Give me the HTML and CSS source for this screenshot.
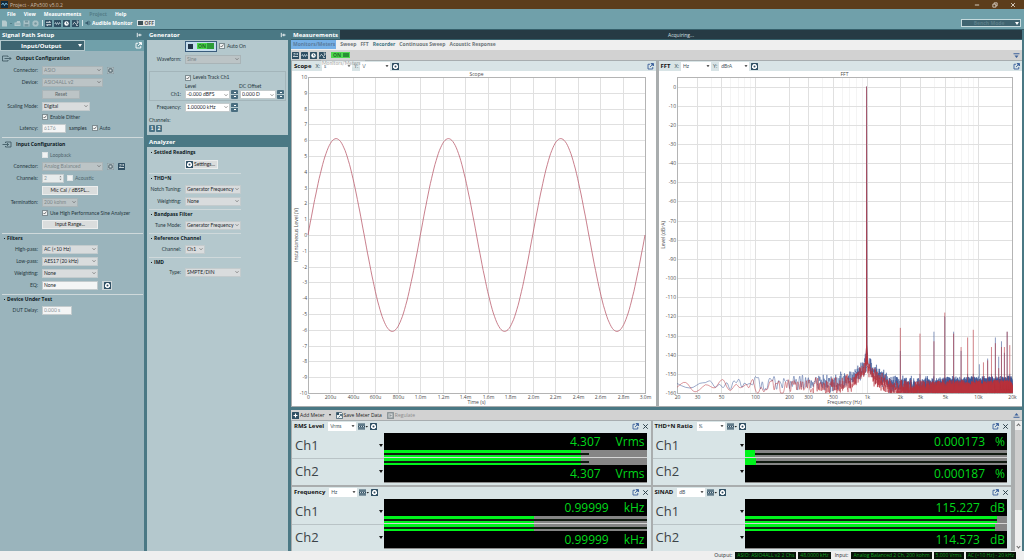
FILE: index.html
```html
<!DOCTYPE html>
<html lang="en">
<head>
<meta charset="utf-8">
<title>Project - APx500 v5.0.2</title>
<link rel="stylesheet" href="styles.css">
</head>
<body>
<svg class="sprite" aria-hidden="true">
  <symbol id="gear" viewBox="0 0 14 14"><rect width="14" height="14" rx="1" fill="#2f4f63"/><path d="M5 2h4l3 3v4l-3 3H5L2 9V5z" fill="#fff"/><circle cx="7" cy="7" r="2" fill="#2f4f63"/></symbol>
  <symbol id="gear-off" viewBox="0 0 14 14"><rect x=".5" y=".5" width="13" height="13" fill="#b7c4c8" stroke="#84959b"/><path d="M5 2h4l3 3v4l-3 3H5L2 9V5z" fill="#6f8087"/><circle cx="7" cy="7" r="2" fill="#c9d3d6"/></symbol>
  <symbol id="gear-pale" viewBox="0 0 14 14"><path d="M4 1h6l3 3v6l-3 3H4l-3-3V4z" fill="#a9c1c6"/><circle cx="7" cy="7" r="2.500" fill="#7698a0"/></symbol>
  <symbol id="swap" viewBox="0 0 14 14"><rect width="14" height="14" rx="1" fill="#2f4f63"/><path d="M2 4.5h9M8.500 2.500l2.500 2M3 9.500h9M5.500 12L3 9.500" stroke="#fff" stroke-width="1.700" fill="none"/></symbol>
  <symbol id="wave" viewBox="0 0 14 14"><rect width="14" height="14" rx="1" fill="#2f4f63"/><path d="M1.500 8l1.500-3 2 4 2-4 2 4 2-4 1.500 3" stroke="#cfe0e6" stroke-width="1.400" fill="none"/></symbol>
  <symbol id="clock" viewBox="0 0 14 14"><rect width="14" height="14" rx="1" fill="#2f4f63"/><circle cx="7" cy="7" r="4.500" fill="#fff"/><path d="M7 4v3.500h2.500" stroke="#2f4f63" stroke-width="1.300" fill="none"/></symbol>
  <symbol id="graph" viewBox="0 0 14 14"><rect width="14" height="14" rx="1" fill="#2f4f63"/><path d="M2 9c2-5 3-5 5-2s3 2 5-3" stroke="#fff" stroke-width="1.500" fill="none"/><path d="M8 11h4M9 2h3v3" stroke="#fff" stroke-width="1.200" fill="none"/></symbol>
  <symbol id="bars" viewBox="0 0 14 14"><rect width="14" height="14" rx="1" fill="#2f4f63"/><path d="M2 9h10" stroke="#e6eef0" stroke-width="1.600"/><path d="M8 2v4M11 2v4M3 3h3M3 6h3" stroke="#e6eef0" stroke-width="1.300"/></symbol>
  <symbol id="meterset" viewBox="0 0 20 14"><rect y="1" width="14" height="12" fill="#2f4f63"/><path d="M0 4h14M0 10h14" stroke="#d8e4e6" stroke-width="1.200"/><path d="M2 7h2M6 7h2M10 7h2" stroke="#fff" stroke-width="1.500"/><path d="M15 6h5l-2.500 3z" fill="#222"/></symbol>
  <symbol id="popout" viewBox="0 0 14 14"><path d="M6 2.500H2v9.500h9.500V8" fill="none" stroke="currentColor" stroke-width="1.800"/><path d="M8 1h5v5zM12 2L6 8" fill="currentColor" stroke="currentColor" stroke-width="1.700"/></symbol>
  <symbol id="pin" viewBox="0 0 14 14"><path d="M3 2v10M5 7h8M9 4v6" stroke="currentColor" stroke-width="2" fill="none"/></symbol>
  <symbol id="cross" viewBox="0 0 14 14"><path d="M2.500 2.500l9 9M11.500 2.500l-9 9" stroke="currentColor" stroke-width="2" fill="none"/></symbol>
  <symbol id="up" viewBox="0 0 14 14"><path d="M7 2l4 5H3z" fill="currentColor"/><path d="M1 10.500h12" stroke="currentColor" stroke-width="2"/></symbol>
  <symbol id="down" viewBox="0 0 14 14"><path d="M7 12L3 7h8z" fill="currentColor"/><path d="M1 3.500h12" stroke="currentColor" stroke-width="2"/></symbol>
  <symbol id="out" viewBox="0 0 20 14"><path d="M12 4V2H1v10h11v-2M5 7h13M15 4l3 3-3 3" fill="none" stroke="#37525c" stroke-width="1.600"/></symbol>
  <symbol id="in" viewBox="0 0 20 14"><path d="M7 4V2h11v10H7v-2M1 7h12M10 4l3 3-3 3" fill="none" stroke="#37525c" stroke-width="1.600"/></symbol>
  <symbol id="page" viewBox="0 0 14 14"><path d="M2 1h7l3 3v9H2z" fill="#b5cace"/></symbol>
  <symbol id="folder" viewBox="0 0 14 14"><path d="M1 5h4l1-3h6v3h1v7H1z" fill="#b5cace"/><path d="M3 8h9" stroke="#7698a0" stroke-width="1.500"/></symbol>
  <symbol id="disk" viewBox="0 0 14 14"><path d="M1 1h12v12H1z" fill="#a9c1c6"/><path d="M4 1h6v4H4zM3 8h8v5H3z" fill="#7698a0"/></symbol>
  <symbol id="speaker" viewBox="0 0 14 14"><path d="M1 5h3l4-4v12L4 9H1z" fill="#34586a"/><path d="M10 3c2 2 2 6 0 8" stroke="#34586a" stroke-width="1.500" fill="none"/></symbol>
  <symbol id="plus" viewBox="0 0 14 14"><rect width="14" height="14" rx="1" fill="#2f4f63"/><path d="M7 3v8M3 7h8" stroke="#fff" stroke-width="2.200"/></symbol>
  <symbol id="save" viewBox="0 0 14 14"><path d="M1 1h10l2 2v10H1z" fill="#eef2f3" stroke="#2f4f63" stroke-width="1.400"/><path d="M1 1h5v5H1z" fill="#2f4f63"/><path d="M5 11l6-6M7.500 5H11v3.500" stroke="#2f4f63" stroke-width="1.500" fill="none"/></symbol>
  <symbol id="play" viewBox="0 0 14 14"><rect width="14" height="14" rx="1" fill="#8d9699"/><path d="M3 3h8v8H3z" fill="#d5d8d9"/><path d="M5 4l5 3-5 3z" fill="#8d9699"/></symbol>
  <symbol id="min" viewBox="0 0 14 14"><path d="M2 7h10" stroke="#e8dfd5" stroke-width="2"/></symbol>
  <symbol id="restore" viewBox="0 0 14 14"><path d="M2 5h7v7H2zM5 5V2h7v7H9" stroke="#e8dfd5" stroke-width="1.800" fill="none"/></symbol>
  <symbol id="app" viewBox="0 0 14 14"><rect width="14" height="14" fill="#102c40"/><path d="M1 8l3-4 3 5 3-5 3 4" stroke="#8fd0f0" stroke-width="1.600" fill="none"/></symbol>
</svg>

<header class="titlebar">
  <svg class="icon"><use href="#app"/></svg><span class="grow">Project - APx500 v5.0.2</span>
  <button class="win" aria-label="Minimize"><svg class="tiny"><use href="#min"/></svg></button>
  <button class="win" aria-label="Restore"><svg class="tiny"><use href="#restore"/></svg></button>
  <button class="win light" aria-label="Close"><svg class="tiny"><use href="#cross"/></svg></button>
</header>
<div class="topbar">
  <div class="grow">
    <nav class="menu"><a href="#">File</a><a href="#">View</a><a href="#">Measurements</a><a href="#" class="off">Project</a><a href="#">Help</a></nav>
    <div class="tools">
      <svg class="icon"><use href="#page"/></svg><span class="dot"></span>
      <svg class="icon"><use href="#folder"/></svg><svg class="icon"><use href="#disk"/></svg><svg class="icon"><use href="#gear-pale"/></svg>
      <span class="sep"></span>
      <svg class="icon"><use href="#swap"/></svg><svg class="icon"><use href="#wave"/></svg><svg class="icon"><use href="#clock"/></svg><svg class="icon"><use href="#graph"/></svg>
      <span class="sep"></span>
      <svg class="tiny"><use href="#speaker"/></svg><span class="audible">Audible Monitor</span>
      <button class="toggle off"><i></i>OFF</button>
    </div>
  </div>
  <button class="bench"><span class="grow">Bench Mode</span><span class="tri"></span></button>
</div>

<main class="workspace">
  <section class="signal">
    <h2 class="bar">Signal Path Setup<svg class="tiny"><use href="#pin"/></svg></h2>
    <div class="picker"><button class="io">Input/Output<span class="tri"></span></button><svg class="icon"><use href="#popout"/></svg></div>
    <div class="group first">
      <h3 class="big"><svg class="wide"><use href="#out"/></svg>Output Configuration</h3>
      <div class="row"><label for="oc">Connector:</label><select id="oc" class="w60" disabled><option>ASIO</option></select><svg class="icon gap"><use href="#gear-off"/></svg></div>
      <div class="row"><label for="od">Device:</label><select id="od" class="w60" disabled><option>ASIO4ALL v2</option></select></div>
      <div class="row"><span></span><button class="btn w38" disabled>Reset</button></div>
      <div class="row"><label for="sm">Scaling Mode:</label><select id="sm" class="w48"><option>Digital</option></select></div>
      <div class="row short"><span></span><label class="check"><input type="checkbox" checked>Enable Dither</label></div>
      <div class="row"><label for="la">Latency:</label><input id="la" class="w24" value="6176" disabled><em>samples</em><label class="check"><input type="checkbox" checked>Auto</label></div>
    </div>
    <div class="group">
      <h3 class="big"><svg class="wide"><use href="#in"/></svg>Input Configuration</h3>
      <div class="row short"><span></span><label class="check dim"><input type="checkbox">Loopback</label></div>
      <div class="row"><label for="ic">Connector:</label><select id="ic" class="w60" disabled><option>Analog Balanced</option></select><svg class="icon gap"><use href="#gear-off"/></svg><svg class="icon gap"><use href="#bars"/></svg></div>
      <div class="row"><label for="ch">Channels:</label><input id="ch" class="w22 spin" value="2" disabled><label class="check dim"><input type="checkbox">Acoustic</label></div>
      <div class="row"><span></span><button class="btn w56">Mic Cal / dBSPL...</button></div>
      <div class="row"><label for="te">Termination:</label><select id="te" class="w36" disabled><option>200 kohm</option></select></div>
      <div class="row short"><span></span><label class="check"><input type="checkbox" checked>Use High Performance Sine Analyzer</label></div>
      <div class="row"><span></span><button class="btn w56">Input Range...</button></div>
    </div>
    <div class="group">
      <h3>Filters</h3>
      <div class="row"><label for="hp">High-pass:</label><select id="hp" class="w56"><option>AC (&lt;10 Hz)</option></select></div>
      <div class="row"><label for="lp">Low-pass:</label><select id="lp" class="w56"><option>AES17 (20 kHz)</option></select></div>
      <div class="row"><label for="we">Weighting:</label><select id="we" class="w56"><option>None</option></select></div>
      <div class="row"><label for="eq">EQ:</label><input id="eq" class="w56" value="None"><button class="iconbtn" aria-label="EQ settings"><svg class="icon"><use href="#gear"/></svg></button></div>
    </div>
    <div class="group">
      <h3>Device Under Test</h3>
      <div class="row"><label for="dd">DUT Delay:</label><input id="dd" class="w30" value="0.000 s" disabled></div>
    </div>
  </section>

  <div class="middle">
    <section class="generator">
      <h2 class="bar">Generator<svg class="tiny"><use href="#pin"/></svg></h2>
      <div class="row on-row"><span></span><button class="power"><i></i><b>ON</b></button><label class="check"><input type="checkbox" checked>Auto On</label></div>
      <div class="row wf"><label for="wa">Waveform:</label><select id="wa" class="w56" disabled><option>Sine</option></select></div>
      <fieldset class="levels">
        <div class="row track"><span></span><label class="check"><input type="checkbox" checked>Levels Track Ch1</label></div>
        <div class="row cap"><span></span><label for="lv" class="lefty w54">Level</label><label for="dc" class="lefty">DC Offset</label></div>
        <div class="row ch"><label for="lv">Ch1:</label><select id="lv" class="w44 white"><option>-0.000 dBFS</option></select><button class="step" aria-label="Level step"></button><select id="dc" class="w36 white"><option>0.000 D</option></select><button class="step" aria-label="Offset step"></button></div>
      </fieldset>
      <div class="row freq"><label for="fr">Frequency:</label><select id="fr" class="w44 white"><option>1.00000 kHz</option></select><button class="step" aria-label="Frequency step"></button></div>
      <p class="channels">Channels:</p>
      <div class="chbtns"><button>1</button><button>2</button></div>
    </section>
    <section class="analyzer">
      <h2 class="bar">Analyzer</h2>
      <div class="group"><h3>Settled Readings</h3>
        <div class="row tall"><span></span><button class="btn settings"><svg class="icon"><use href="#gear"/></svg>Settings...</button></div></div>
      <div class="group"><h3>THD+N</h3>
        <div class="row"><label for="nt">Notch Tuning:</label><select id="nt" class="w56"><option>Generator Frequency</option></select></div>
        <div class="row"><label for="w2">Weighting:</label><select id="w2" class="w56"><option>None</option></select></div></div>
      <div class="group"><h3>Bandpass Filter</h3>
        <div class="row"><label for="tm">Tune Mode:</label><select id="tm" class="w56"><option>Generator Frequency</option></select></div></div>
      <div class="group"><h3>Reference Channel</h3>
        <div class="row"><label for="rc">Channel:</label><select id="rc" class="w20"><option>Ch1</option></select></div></div>
      <div class="group"><h3>IMD</h3>
        <div class="row imd"><label for="ty">Type:</label><select id="ty" class="w56"><option>SMPTE/DIN</option></select></div></div>
    </section>
  </div>

  <section class="measure">
    <div class="mhead"><h2>Measurements</h2><p>Acquiring...</p></div>
    <nav class="tabs"><a href="#" class="sel">Monitors/Meters</a><a href="#">Sweep</a><a href="#">FFT</a><a href="#" class="hot">Recorder</a><a href="#">Continuous Sweep</a><a href="#">Acoustic Response</a></nav>
    <div class="mtools"><svg class="icon"><use href="#bars"/></svg><svg class="icon"><use href="#wave"/></svg><svg class="icon"><use href="#clock"/></svg><svg class="icon"><use href="#graph"/></svg><button class="toggle on">ON<i></i></button><span class="grow"></span><svg class="icon blue"><use href="#down"/></svg></div>
    <div class="charts">
      <article class="pane">
        <header class="phead"><h3>Scope</h3><label for="sx">X:</label><span class="held"><select id="sx" class="unit w30"><option>s</option></select><span class="ghost">Monitors/Meters</span></span><label for="sy">Y:</label><select id="sy" class="unit w30"><option>V</option></select><svg class="icon"><use href="#gear"/></svg><span class="grow"></span><svg class="icon blue"><use href="#popout"/></svg></header>
        <div class="plot" id="scope"></div>
      </article>
      <article class="pane">
        <header class="phead"><h3>FFT</h3><label for="fx">X:</label><select id="fx" class="unit w30"><option>Hz</option></select><label for="fy">Y:</label><select id="fy" class="unit w30"><option>dBrA</option></select><svg class="icon"><use href="#gear"/></svg><span class="grow"></span><svg class="icon blue"><use href="#popout"/></svg></header>
        <div class="plot" id="fft"></div>
      </article>
    </div>
    <div class="mtools meterbar"><button><svg class="icon"><use href="#plus"/></svg>Add Meter<span class="tri dark"></span></button><button><svg class="icon"><use href="#save"/></svg>Save Meter Data</button><button disabled><svg class="icon"><use href="#play"/></svg>Regulate</button><span class="grow"></span><svg class="icon blue"><use href="#up"/></svg></div>
    <div class="meterwrap">
      <div class="meters">
        <article class="meter">
          <header class="phead"><h3>RMS Level</h3><select class="unit w28" aria-label="RMS Level unit"><option>Vrms</option></select><svg class="wide"><use href="#meterset"/></svg><svg class="icon"><use href="#gear"/></svg><span class="grow"></span><svg class="icon blue"><use href="#popout"/></svg><svg class="icon shut"><use href="#cross"/></svg></header>
          <div class="mbody">
            <div class="names"><div>Ch1<span class="tri dark"></span></div><div>Ch2<span class="tri dark"></span></div></div>
            <div class="lcd"><p><span>4.307</span><span>Vrms</span></p>
              <div class="level"><i style="width:75%"></i><b style="width:78%"></b></div><div class="level"><i style="width:75%"></i><b style="width:78%"></b></div>
              <p><span>4.307</span><span>Vrms</span></p></div>
          </div>
        </article>
        <article class="meter">
          <header class="phead"><h3>THD+N Ratio</h3><select class="unit w28" aria-label="THD+N Ratio unit"><option>%</option></select><svg class="wide"><use href="#meterset"/></svg><svg class="icon"><use href="#gear"/></svg><span class="grow"></span><svg class="icon blue"><use href="#popout"/></svg><svg class="icon shut"><use href="#cross"/></svg></header>
          <div class="mbody">
            <div class="names"><div>Ch1<span class="tri dark"></span></div><div>Ch2<span class="tri dark"></span></div></div>
            <div class="lcd"><p><span>0.000173</span><span>%</span></p>
              <div class="level"><b style="width:100%"></b><i style="width:4%"></i></div><div class="level"><b style="width:100%"></b><i style="width:4.5%"></i></div>
              <p><span>0.000187</span><span>%</span></p></div>
          </div>
        </article>
        <article class="meter">
          <header class="phead"><h3>Frequency</h3><select class="unit w28" aria-label="Frequency unit"><option>Hz</option></select><svg class="wide"><use href="#meterset"/></svg><svg class="icon"><use href="#gear"/></svg><span class="grow"></span><svg class="icon blue"><use href="#popout"/></svg><svg class="icon shut"><use href="#cross"/></svg></header>
          <div class="mbody">
            <div class="names"><div>Ch1<span class="tri dark"></span></div><div>Ch2<span class="tri dark"></span></div></div>
            <div class="lcd"><p><span>0.99999</span><span>kHz</span></p>
              <div class="level"><i style="width:57%"></i><b style="width:100%"></b></div><div class="level"><i style="width:57%"></i><b style="width:100%"></b></div>
              <p><span>0.99999</span><span>kHz</span></p></div>
          </div>
        </article>
        <article class="meter">
          <header class="phead"><h3>SINAD</h3><select class="unit w28" aria-label="SINAD unit"><option>dB</option></select><svg class="wide"><use href="#meterset"/></svg><svg class="icon"><use href="#gear"/></svg><span class="grow"></span><svg class="icon blue"><use href="#popout"/></svg><svg class="icon shut"><use href="#cross"/></svg></header>
          <div class="mbody">
            <div class="names"><div>Ch1<span class="tri dark"></span></div><div>Ch2<span class="tri dark"></span></div></div>
            <div class="lcd"><p><span>115.227</span><span>dB</span></p>
              <div class="level"><i style="width:96%"></i><b style="width:96%"></b></div><div class="level"><i style="width:95.5%"></i><b style="width:95.5%"></b></div>
              <p><span>114.573</span><span>dB</span></p></div>
          </div>
        </article>
      </div>
      <div class="scroll"><span class="chev upw"></span><i></i><span class="chev"></span></div>
    </div>
  </section>
</main>
<footer class="status"><span>Output:</span><b>ASIO: ASIO4ALL v2 2 Chs</b><b>48.0000 kHz</b><span>Input:</span><b>Analog Balanced 2 Ch, 200 kohm</b><b>5.000 Vrms</b><b>AC (&lt;10 Hz) - 20 kHz</b></footer>
<script src="charts.js"></script>
</body>
</html>
```

FILE: styles.css
```css
* { box-sizing: border-box; }
body {
  margin: 0; min-height: 100vh; display: flex; flex-direction: column;
  background: #4a7884; color: #1b282d;
  font: 5px/7px "Lato", "Open Sans", sans-serif;
}
h2, h3, p, fieldset { margin: 0; padding: 0; border: 0; font-weight: 400; }
a { color: inherit; text-decoration: none; }
button, input, select { font: inherit; color: inherit; margin: 0; padding: 0; border: 0; border-radius: 0; }
button { background: none; }
em { font-style: normal; }
.sprite { position: absolute; width: 0; height: 0; }
.icon { width: 7px; height: 7px; flex: none; }
.tiny { width: 6px; height: 6px; flex: none; display: block; }
.wide { width: 10px; height: 7px; flex: none; }
.grow { flex: 1; }
.blue { color: #3a5f9a; }
.tri { border: 2px solid transparent; border-top: 3px solid #fff; border-bottom: 0; display: inline-block; flex: none; }
.tri.dark { border-top-color: #111; }

/* window frame */
.titlebar { height: 9px; display: flex; align-items: center; gap: 2px; padding: 0 8px 0 1px; background: #5c3d1b; color: #c9bcae; font: 5px/8px "Open Sans", sans-serif; }
.win { width: 6px; margin-left: 10px; }
.light { color: #e8dfd5; }
.topbar { display: flex; align-items: flex-end; height: 21px; padding: 2px 3px 2px 1px; background: #70a0aa; border-bottom: 1px solid #36606b; font-family: "Open Sans", sans-serif; }
.topbar > .grow { display: flex; flex-direction: column; gap: 1px; }
.menu { display: flex; gap: 8px; padding-left: 6px; color: #fff; font-weight: 700; line-height: 8px; }
.menu .off { color: #557f89; }
.tools { display: flex; align-items: center; gap: 2px; height: 8px; }
.dot { width: 2px; height: 1px; background: #54808a; }
.sep { width: 1px; height: 6px; background: #d5e4e7; margin: 0 1px; }
.tools .icon + .sep { margin-right: 0; }
.audible { color: #fff; font-weight: 700; margin-left: -1px; }
.toggle { display: inline-flex; align-items: center; gap: 2px; height: 6px; padding: 0 1px; font: 700 5px/6px "Open Sans", sans-serif; }
.toggle.off { background: #dfe6e8; color: #555; margin-left: 2px; }
.toggle.off i { width: 5px; height: 4px; background: #3d5158; }
.toggle.on { background: #50d850; color: #1e6a24; margin-left: 3px; padding-left: 2px; }
.toggle.on i { width: 6px; height: 4px; background: #289034; }
.bench { display: flex; align-items: center; width: 60px; height: 8px; padding: 0 1px; border: 1px solid #c6dadd; background: #3f6470; color: #5b7e88; font: 700 5px/6px "Open Sans", sans-serif; white-space: nowrap; }

/* columns */
.workspace { flex: 1; display: grid; grid-template-columns: 144px 141px minmax(0, 1fr); gap: 3px; padding-right: 2px; }
.bar { display: flex; justify-content: space-between; align-items: center; height: 10px; padding: 0 2px; background: #4a7884; color: #fff; font: 700 6px/9px "Open Sans", sans-serif; }
.signal { background: #9ab4bc; }
.picker { display: flex; justify-content: space-between; align-items: center; padding-right: 2px; height: 11px; background: #70a0aa; color: #fff; }
.io { display: flex; justify-content: space-between; align-items: center; width: 85px; height: 11px; padding: 0 2px 0 20px; border: 1px solid #b4c9cd; background: #3d6470; color: #fff; font: 700 6px/8px "Open Sans", sans-serif; }
.group { padding: 0 0 3px; margin: 0 1px 0 2px; border-top: 1px solid #cfd9db; }
.group.first { border: 0; padding-top: 1px; }
.group h3 { font: 700 5px/9px "Open Sans", sans-serif; height: 9px; color: #0d1a1f; display: flex; align-items: center; gap: 2px; }
.group h3:not(.big)::before { content: ""; width: 1px; height: 1px; margin: 0 0 0 2px; background: #15242a; }
.group h3.big { height: 12px; gap: 4px; }
.row { display: flex; align-items: center; height: 12px; }
.row.short { height: 10px; }
.row > :first-child { width: 36px; margin-right: 4px; flex: none; text-align: right; }
.row > span:first-child { display: block; }
.row label, .channels { color: #26383f; white-space: nowrap; }
.row .gap { margin-left: 4px; }
.row em { margin: 0 5px 0 3px; color: #1b2a30; }
.check { display: flex; align-items: center; gap: 2px; }
.row .dim { color: #4f646c; }
.spin + .check { margin-left: 3px; }
input[type=checkbox] { appearance: none; width: 6px; height: 6px; background: #f1f3f3; border: 1px solid #dfe4e5; }
input[type=checkbox]:checked { border-color: #7e8d92; background: #f1f3f3 url("data:image/svg+xml,%3Csvg xmlns='http://www.w3.org/2000/svg' viewBox='0 0 8 8'%3E%3Cpath d='M1 4l2 2 4-5' stroke='%23333' fill='none' stroke-width='1.300'/%3E%3C/svg%3E"); }
select, .row input:not([type=checkbox]) { height: 9px; padding: 0 1px; line-height: 7px; border: 1px solid #c3cbcd; }
select { appearance: none; background: #d9dcdd url("data:image/svg+xml,%3Csvg xmlns='http://www.w3.org/2000/svg' viewBox='0 0 8 8'%3E%3Cpath d='M1 2.500l3 3 3-3' stroke='%23555' fill='none' stroke-width='1.200'/%3E%3C/svg%3E") no-repeat right 1px center / 4px 4px; }
select.white { background-color: #fff; }
.row input:not([type=checkbox]) { background: #f4f5f5; }
.row input.spin { background: #e8ecec url("data:image/svg+xml,%3Csvg xmlns='http://www.w3.org/2000/svg' viewBox='0 0 8 14'%3E%3Cpath d='M4 1l3 4H1zM4 13l3-4H1z' fill='%23888'/%3E%3C/svg%3E") no-repeat right 1px center / 3px 6px; }
select:disabled { background-color: #bcc4c6; border-color: #a9b4b7; color: #7b8689; opacity: 1; }
.row input:disabled { color: #8c979b; }
.btn { height: 9px; background: #dadddd; border: 1px solid #eceeee; text-align: center; line-height: 7px; color: #222; }
.btn:disabled { background: #bcc4c6; border-color: #aab5b8; color: #5c666a; }
.iconbtn { display: flex; align-items: center; justify-content: center; width: 10px; height: 9px; margin-left: 4px; background: #cdd6d8; }
.w20 { width: 20px; } .w22 { width: 22px; } .w24 { width: 24px; } .w28 { width: 28px; } .w30 { width: 30px; }
.w36 { width: 36px; } .w38 { width: 38px; } .w44 { width: 45px; } .w48 { width: 48px; } .w54 { width: 54px; } .w56 { width: 56px; } .w60 { width: 61px; }

/* generator and analyzer */
.middle { display: flex; flex-direction: column; gap: 2px; }
.generator, .analyzer { background: #b4c8cd; }
.generator { padding-bottom: 3px; }
.analyzer { flex: 1; }
.middle .row > :first-child { width: 34px; }
.on-row .power { display: flex; align-items: center; gap: 4px; width: 32px; height: 11px; padding: 0 2px; margin-right: 2px; border: 1px solid #3a5c7c; background: #c4dcec; }
.power i { width: 5px; height: 5px; flex: none; background: #22354a; }
.power b { width: 17px; height: 6px; background: linear-gradient(90deg, #4ad94a 60%, #2c9c38 60%); color: #1c6424; font: 700 5px/6px "Open Sans", sans-serif; text-align: left; padding-left: 1px; }
.middle .row.wf { height: 14px; margin-bottom: 5px; }
.levels { border: 1px solid #a3b5ba; margin: 0 2px; }
.levels .row > :first-child { width: 31px; }
.levels .row.track { height: 11px; }
.levels .row.cap { height: 6px; }
.levels .row.ch { height: 11px; }
.row .lefty { text-align: left; }
.step { width: 7px; height: 9px; flex: none; margin: 0 1px; border-radius: 1px; background: linear-gradient(#b4c8cd, #b4c8cd) center / 7px 1px no-repeat, linear-gradient(#fff, #fff) 3px 2px / 2px 1px no-repeat, linear-gradient(#fff, #fff) 3px 6px / 2px 1px no-repeat, #4a6e80; }
.levels .step + select { margin-left: 1px; }
.channels { padding: 4px 2px 1px; }
.chbtns { display: flex; gap: 1px; padding-left: 2px; }
.chbtns button { width: 6px; height: 7px; background: #4a7284; color: #fff; border-radius: 1px; font-weight: 700; line-height: 7px; }
.analyzer .group { margin-right: 47px; padding-bottom: 2px; }
.analyzer .bar + .group { border-top: 0; padding-top: 1px; }
.row.tall { height: 14px; }
.row.imd { height: 10px; }
.settings { display: flex; align-items: center; gap: 1px; width: 33px; }
.analyzer .group .row > :first-child { width: 32px; }

/* measurements */
.measure { display: flex; flex-direction: column; min-width: 0; }
.mhead { display: flex; height: 10px; background: #263a44; border-bottom: 1px solid #36606b; }
.mhead h2 { width: 49px; padding-left: 2px; background: #4a7884; color: #fff; font: 700 6px/10px "Open Sans", sans-serif; }
.mhead p { flex: 1; text-align: center; color: #d9e0e2; font: 5px/10px "Open Sans", sans-serif; }
.tabs { display: flex; gap: 4px; height: 10px; background: #efefef; color: #6d7679; font: 700 5px/9px "Open Sans", sans-serif; }
.tabs .sel { padding: 0 1px 0 2px; background: #76b0e6; color: #5a7da0; height: 9px; }
.tabs .hot { color: #3c7280; }
.mtools { display: flex; align-items: center; gap: 2px; height: 11px; padding: 0 2px 0 1px; background: #d2d2d2; border-bottom: 1px solid #a7adaf; }
.charts { flex: 1; display: grid; grid-template-columns: minmax(0, 1fr) minmax(0, 1fr); gap: 2px; background: #a9adae; padding-bottom: 1px; }
.pane { display: flex; flex-direction: column; background: #fff; margin-left: 1px; }
.phead { display: flex; align-items: center; gap: 2px; height: 10px; padding: 0 2px; background: #d8e4e6; color: #44565d; flex: none; }
.phead h3 { color: #111; font: 700 6px/9px "Open Sans", sans-serif; margin-right: 2px; }
.shut { margin-left: 1px; color: #2b3f49; }
select.unit { height: 9px; border: 0; background: #fff url("data:image/svg+xml,%3Csvg xmlns='http://www.w3.org/2000/svg' viewBox='0 0 8 8'%3E%3Cpath d='M1 2.500h6L4 6z' fill='%23222'/%3E%3C/svg%3E") no-repeat right 1px center / 4px 4px; padding: 0 2px; }
.held { position: relative; display: flex; }
.ghost { position: absolute; left: -1px; top: -2px; width: 44px; padding-left: 1px; line-height: 7px; font-weight: 700; color: #8a8a8a; background: rgb(255 255 255 / .4); opacity: .6; }
.plot { flex: 1; position: relative; min-height: 100px; }
.plot svg { position: absolute; inset: 0; width: 100%; height: 100%; }
.plot text { font: 5px "Open Sans", sans-serif; fill: #4a4a4a; }
.grid { stroke: #e0e0e0; fill: none; }
.grid.minor { stroke: #f4f4f4; }
.frame { stroke: #b4b4b4; fill: none; }
.meterbar { margin-top: 3px; height: 11px; }
.meterbar button { display: flex; align-items: center; gap: 1px; margin-right: 3px; font: 5px/8px "Open Sans", sans-serif; color: #222; }
.meterbar .tri { border-width: 1px; border-top-width: 2px; margin-left: 3px; }
.meterbar button:disabled { color: #8b8b8b; }
.meterwrap { display: flex; background: #a9adae; }
.meters { flex: 1; display: grid; grid-template-columns: minmax(0, 1fr) minmax(0, 1fr); gap: 2px; padding: 0 4px 0 1px; }
.meter { background: #d8e4e6; height: 64px; min-width: 0; }
.mbody { display: grid; grid-template-columns: 92px minmax(0, 1fr); padding: 2px 4px 2px 0; }
.names { font: 13px/25px "Open Sans", sans-serif; color: #3c4347; }
.names > div { display: flex; align-items: center; justify-content: space-between; height: 25px; padding: 0 1px 0 3px; }
.names > div + div { border-top: 1px solid #b9c3c6; }
.lcd { display: grid; grid-template-rows: 17px 8px 7px 17px; background: #8a8a8a; }
.lcd p { display: flex; justify-content: flex-end; gap: 15px; padding-right: 2px; background: #000; color: #00d81a; font: 12px/17px "Open Sans", sans-serif; }
.lcd p span { white-space: nowrap; }
.lcd p + .level { border-bottom: 1px solid #d5d5d5; }
.level { position: relative; background: #858585; }
.level i { position: absolute; left: 0; top: 0; bottom: 0; background: #00f51c; }
.level b { position: absolute; left: 0; top: 3px; height: 2px; background: #101a10; }
.meter:nth-child(even) .lcd p { gap: 10px; }
.scroll { width: 7px; display: flex; flex-direction: column; align-items: center; gap: 3px; padding: 3px 0; background: #efefef; }
.scroll i { width: 100%; height: 80px; background: #cdcdcd; }
.scroll .chev:last-child { margin-top: auto; }
.chev { width: 3px; height: 3px; border: solid #666; border-width: 0 1px 1px 0; transform: rotate(45deg); }
.chev.upw { transform: rotate(225deg); }

.status { display: flex; justify-content: flex-end; align-items: center; gap: 2px; height: 9px; padding-right: 8px; background: #efefef; font-family: "Open Sans", sans-serif; }
.status span { margin: 0 1px 0 2px; }
.status b { height: 7px; padding: 0 2px; background: #0a120a; color: #10a020; font-weight: 400; line-height: 7px; }
```

FILE: charts.js
```js
const NS = 'http://www.w3.org/2000/svg';

function random(seed) {
  return () => {
    seed = (seed * 1664525 + 1013904223) % 4294967296;
    return seed / 4294967296;
  };
}

function surface(host) {
  host.textContent = '';
  const svg = document.createElementNS(NS, 'svg');
  host.append(svg);
  const add = (name, attrs, text) => {
    const el = document.createElementNS(NS, name);
    for (const k in attrs) el.setAttribute(k, attrs[k]);
    if (text !== undefined) el.textContent = text;
    svg.append(el);
    return el;
  };
  return { add, w: host.clientWidth, h: host.clientHeight };
}

function drawAxes(s, box, title, xName, yName) {
  s.add('rect', { class: 'frame', x: box.l + 0.5, y: box.t + 0.5, width: box.r - box.l, height: box.b - box.t });
  const mid = (box.l + box.r) / 2;
  s.add('text', { x: mid, y: box.t - 1, 'text-anchor': 'middle' }, title);
  s.add('text', { x: mid, y: box.b + 11, 'text-anchor': 'middle' }, xName);
  const my = (box.t + box.b) / 2;
  s.add('text', { x: 6, y: my, 'text-anchor': 'middle', transform: `rotate(-90 6 ${my})` }, yName);
}

function drawScope() {
  const s = surface(document.getElementById('scope'));
  const box = { l: 16, r: s.w - 11, t: 6, b: s.h - 13 };
  const X = t => box.l + t / 3 * (box.r - box.l);
  const Y = v => box.t + (10 - v) / 20 * (box.b - box.t);
  for (let i = 0; i <= 15; i++) {
    const x = Math.round(X(i / 5)) + 0.5;
    s.add('path', { class: 'grid', d: `M${x} ${box.t}V${box.b}` });
    const name = i === 0 ? '0' : i < 5 ? i * 200 + 'u' : (i / 5).toFixed(1) + 'm';
    s.add('text', { x, y: box.b + 6, 'text-anchor': 'middle' }, name);
  }
  for (let v = -10; v <= 10; v++) {
    const y = Math.round(Y(v)) + 0.5;
    s.add('path', { class: 'grid', d: `M${box.l} ${y}H${box.r}` });
    s.add('text', { x: box.l - 1, y: y + 1.5, 'text-anchor': 'end' }, v);
  }
  drawAxes(s, box, 'Scope', 'Time (s)', 'Instantaneous Level (V)');
  let d = '';
  for (let i = 0; i <= 300; i++) d += (i ? 'L' : 'M') + X(i / 100).toFixed(1) + ' ' + Y(6.1 * Math.sin(i / 50 * Math.PI)).toFixed(1);
  s.add('path', { d, fill: 'none', stroke: '#bb6070', 'stroke-width': 0.8 });
}

const harmonics = [
  [2000, -138, -126], [3000, -150, -129], [4000, -128, -133], [5000, -120, -118], [6000, -128, -129],
  [7000, -138, -136], [8000, -150, -131], [9000, -150, -127], [10200, -145, -153], [11100, -152, -144],
  [12100, -142, -143], [13100, -150, -136], [14200, -131, -134], [15200, -141, -147], [16100, -133, -136],
  [17100, -139, -136], [18100, -128, -128], [19100, -150, -135]
];

function drawFft() {
  const s = surface(document.getElementById('fft'));
  const box = { l: 18, r: s.w - 11, t: 6, b: s.h - 13 };
  const X = f => box.l + Math.log10(f / 20) / 3 * (box.r - box.l);
  const Y = v => box.t + (5 - v) / 165 * (box.b - box.t);
  const named = { 20: '20', 30: '30', 50: '50', 100: '100', 200: '200', 300: '300', 500: '500', 1000: '1k', 2000: '2k', 3000: '3k', 5000: '5k', 10000: '10k', 20000: '20k' };
  for (let dec = 10; dec <= 10000; dec *= 10) {
    for (let m = 1; m < 10; m++) {
      const f = dec * m;
      if (f < 20 || f > 20000) continue;
      const x = Math.round(X(f)) + 0.5;
      s.add('path', { class: named[f] ? 'grid' : 'grid minor', d: `M${x} ${box.t}V${box.b}` });
      if (named[f]) s.add('text', { x, y: box.b + 6, 'text-anchor': 'middle' }, named[f]);
    }
  }
  for (let v = -160; v <= 0; v += 10) {
    const y = Math.round(Y(v)) + 0.5;
    s.add('path', { class: 'grid', d: `M${box.l} ${y}H${box.r}` });
    s.add('text', { x: box.l - 1, y: y + 1.5, 'text-anchor': 'end' }, v);
  }
  drawAxes(s, box, 'FFT', 'Frequency (Hz)', 'Level (dBrA)');

  const trace = (which, seed, floor, color) => {
    const rnd = random(seed);
    let px = X(20), py = Y(floor);
    let d = `M${px} ${py}`;
    for (let f = 24; f <= 20000; f += f < 1400 ? 4 : 5) {
      const skirt = 12 * Math.exp(-Math.abs(Math.log(f / 1000)) / 0.2);
      const high = f > 1500 ? 1.5 : 0;
      const swing = f < 300 ? (rnd() - 0.5) * 10 : (rnd() + rnd() * 0.6 - 0.8) * 7;
      const v = Math.max(-160, floor - high + skirt + swing);
      const x = X(f), y = Y(v);
      if (f < 300) d += `Q${px.toFixed(2)} ${py.toFixed(2)} ${((px + x) / 2).toFixed(2)} ${((py + y) / 2).toFixed(2)}`;
      else d += `L${x.toFixed(2)} ${y.toFixed(2)}`;
      px = x; py = y;
    }
    s.add('path', { d, fill: 'none', stroke: color, 'stroke-width': 0.5, 'stroke-linejoin': 'bevel' });
    for (const h of harmonics) s.add('path', { d: `M${X(h[0])} ${Y(-158)}V${Y(h[which])}`, stroke: color, 'stroke-width': 0.6 });
    const c = X(1000);
    s.add('path', { d: `M${c - 1.5} ${Y(-145)}L${c - 0.6} ${Y(-135)}L${c - 0.3} ${Y(0)}H${c + 0.3}L${c + 0.6} ${Y(-135)}L${c + 1.5} ${Y(-145)}Z`, fill: color });
  };
  trace(1, 77, -155, '#3a5796');
  trace(2, 4242, -157, '#b8323c');
}

function drawAll() { drawScope(); drawFft(); }
drawAll();
addEventListener('resize', drawAll);
```
